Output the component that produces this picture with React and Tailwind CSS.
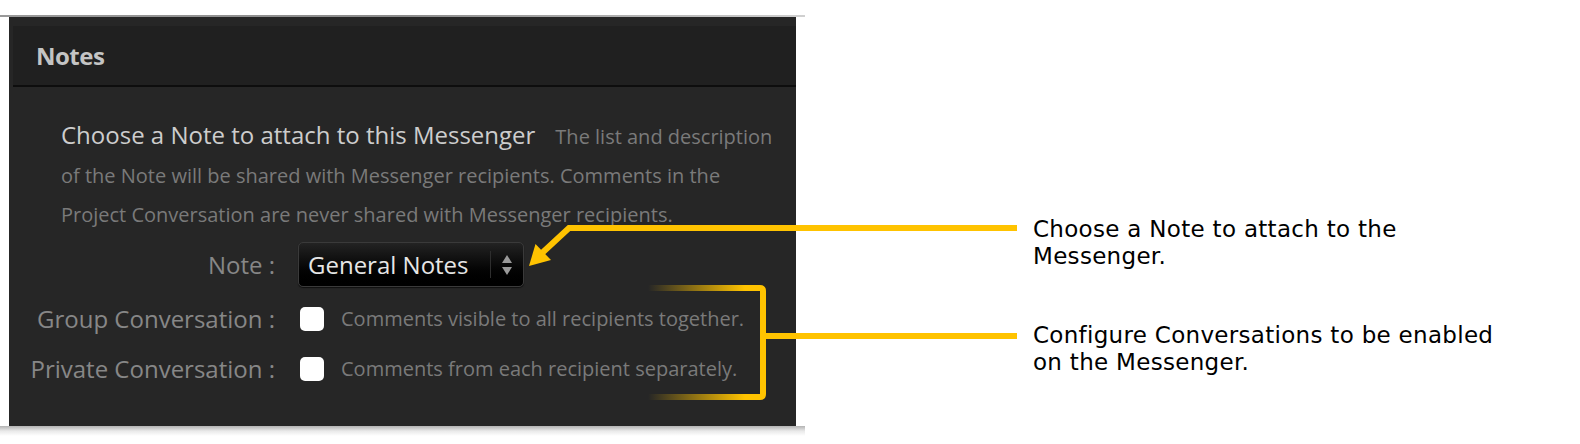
export default function App() {
  return (
    <div className="relative h-[444px] w-[1580px] overflow-hidden bg-white font-['Open_Sans',sans-serif]">
      <div className="flex">
        <div className="w-[806px] pt-[15px]">
          <div className="h-[2px] w-[805px] bg-gradient-to-r from-[#9a9a9a] via-[#8a8a8a] to-[#d0d0d0] blur-[0.6px]" />
          <div className="ml-[9px] h-[409px] w-[787px] bg-[#262626] pt-[9px]">
            <div className="ml-[4px] flex h-[61px] items-center border-b-2 border-[#0d0d0d] bg-[#202020] pl-[23px]">
              <span className="text-[24px] font-bold tracking-[-0.5px] text-[#c4c4c4]">Notes</span>
            </div>

            <div className="pl-[52px] pt-[28px] text-[20px] leading-[39px] text-[#7a7a7a]">
              <span className="text-[24px] text-[#cdcdcd]">Choose a Note to attach to this Messenger</span>
              <span className="ml-[20px]">The list and description</span>
              <br />
              of the Note will be shared with Messenger recipients. Comments in the
              <br />
              Project Conversation are never shared with Messenger recipients.
            </div>

            <div className="mt-[8px] flex items-center">
              <div className="w-[266px] text-right text-[24px] text-[#878787]">Note :</div>
              <div className="ml-[23px] flex h-[45px] w-[226px] items-center rounded-[5px] border border-[#3a3a3a] bg-gradient-to-b from-[#232323] via-[#0a0a0a] to-black shadow-[0_1px_1px_rgba(0,0,0,0.6)]">
                <span className="flex-1 pl-[9px] text-[24px] text-[#e6e6e6]">General Notes</span>
                <div className="h-[27px] w-px bg-[#2e2e2e]" />
                <div className="flex w-[32px] flex-col items-center gap-[4px]">
                  <span className="h-0 w-0 border-x-[5px] border-b-[8px] border-x-transparent border-b-[#9a9a9a]" />
                  <span className="h-0 w-0 border-x-[5px] border-t-[8px] border-x-transparent border-t-[#9a9a9a]" />
                </div>
              </div>
            </div>

            <div className="mt-[17px] flex h-[30px] items-center">
              <div className="w-[266px] text-right text-[24px] text-[#878787]">Group Conversation :</div>
              <div className="ml-[25px] h-[24px] w-[24px] rounded-[5px] bg-white" />
              <div className="ml-[17px] text-[20px] text-[#7a7a7a]">Comments visible to all recipients together.</div>
            </div>

            <div className="mt-[20px] flex h-[30px] items-center">
              <div className="w-[266px] text-right text-[24px] text-[#878787]">Private Conversation :</div>
              <div className="ml-[25px] h-[24px] w-[24px] rounded-[5px] bg-white" />
              <div className="ml-[17px] text-[20px] text-[#7a7a7a]">Comments from each recipient separately.</div>
            </div>
          </div>
          <div className="h-[10px] w-[805px] bg-gradient-to-b from-[#a0a0a0] via-[#e4e4e4] to-white opacity-80" />
        </div>

        <div className="ml-[227px] pt-[216px] font-['DejaVu_Sans',sans-serif] text-[23px] leading-[27px] tracking-[0.3px] text-black">
          <p>
            Choose a Note to attach to the
            <br />
            Messenger.
          </p>
          <p className="mt-[52px]">
            Configure Conversations to be enabled
            <br />
            on the Messenger.
          </p>
        </div>
      </div>

      <svg className="pointer-events-none absolute left-0 top-0" width="1580" height="444">
        <defs>
          <linearGradient id="fade" gradientUnits="userSpaceOnUse" x1="648" y1="0" x2="745" y2="0">
            <stop offset="0" stopColor="#ffc300" stopOpacity="0" />
            <stop offset="1" stopColor="#ffc300" stopOpacity="1" />
          </linearGradient>
        </defs>
        <polyline points="1017,228 569,228 541,254" fill="none" stroke="#ffc300" strokeWidth="6" />
        <polygon points="529,266 535.5,244 551,260" fill="#ffc300" />
        <line x1="648" y1="288" x2="760" y2="288" stroke="url(#fade)" strokeWidth="6" />
        <line x1="648" y1="397" x2="760" y2="397" stroke="url(#fade)" strokeWidth="6" />
        <path d="M756,288 H760 Q763,288 763,291 V394 Q763,397 760,397 H756" fill="none" stroke="#ffc300" strokeWidth="6" />
        <line x1="763" y1="336" x2="1017" y2="336" stroke="#ffc300" strokeWidth="6" />
      </svg>
    </div>
  );
}
